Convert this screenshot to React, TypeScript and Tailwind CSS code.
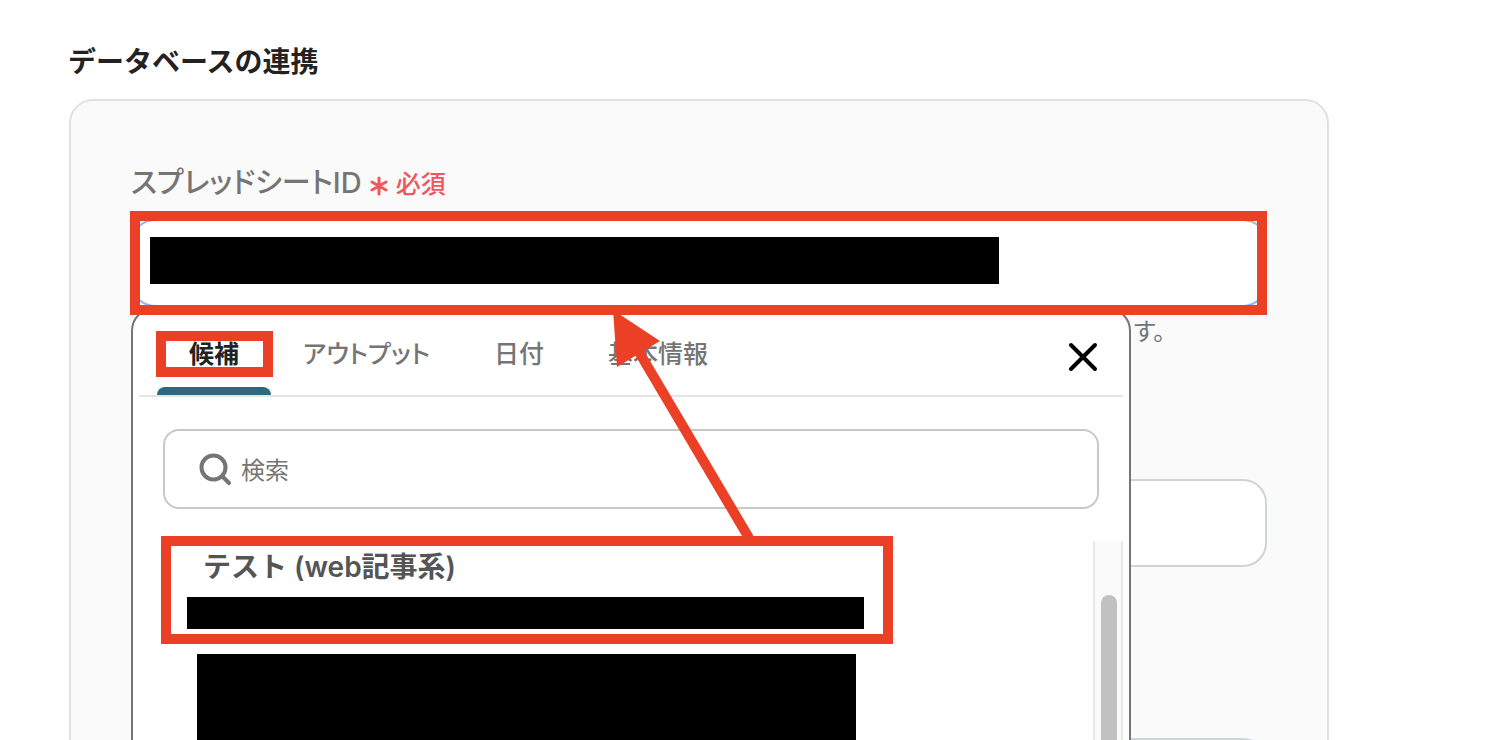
import { useState } from 'react'

const tabs = ['候補', 'アウトプット', '日付', '基本情報']

const SearchIcon = () => (
  <svg className="h-9 w-9 shrink-0" viewBox="0 0 36 36" fill="none" stroke="#757575" strokeWidth="4" strokeLinecap="round" aria-hidden="true">
    <circle cx="16.5" cy="16.5" r="12" />
    <path d="M25.5 25.5l6.5 6.5" />
  </svg>
)

const CloseIcon = () => (
  <svg className="h-8 w-8" viewBox="0 0 32 32" fill="none" stroke="#000000" strokeWidth="4" strokeLinecap="round" aria-hidden="true">
    <path d="M4 4l24 24M28 4L4 28" />
  </svg>
)

// 候補を選ぶポップオーバー
const SuggestPopover = () => {
  const [activeTab, setActiveTab] = useState(tabs[0])
  const [keyword, setKeyword] = useState('')

  return (
    <div className="absolute left-0 top-full z-10 min-h-[600px] w-[1000px] rounded-3xl border-2 border-[#757575] bg-white p-[6px]">
      <div className="flex h-[82px] items-stretch border-b-2 border-[#e5e5e5] pl-[18px] pr-4">
        <div role="tablist" className="flex flex-1">
          {tabs.map(tab => (
            <button
              key={tab}
              type="button"
              role="tab"
              aria-selected={activeTab === tab}
              onClick={() => setActiveTab(tab)}
              className={`relative px-8 text-[25px] [font-feature-settings:'palt'] ${
                activeTab === tab ? 'font-bold text-[#222222]' : 'font-medium text-[#757575]'
              }`}
            >
              {tab}
              {activeTab === tab && (
                <span className="absolute inset-x-0 bottom-0 h-2 rounded-t-lg bg-[#2f6780]" />
              )}
              {tab === '候補' && (
                <span className="absolute -left-px -right-[2px] top-4 h-[46px] border-10 border-[#eb4026]" />
              )}
            </button>
          ))}
        </div>
        <button type="button" aria-label="閉じる" className="mt-[18px] flex h-12 w-12 items-center justify-center">
          <CloseIcon />
        </button>
      </div>

      <label className="mx-6 mt-8 flex h-20 items-center gap-2 rounded-2xl border-2 border-[#c8c8c8] px-8">
        <SearchIcon />
        <input
          type="search"
          aria-label="検索"
          placeholder="検索"
          value={keyword}
          onChange={e => setKeyword(e.target.value)}
          className="w-full bg-transparent pt-[3px] text-2xl outline-none placeholder:text-[#757575]"
        />
      </label>

      <div className="mt-8 flex h-[420px]">
        <div className="relative flex-1 pl-12">
          <button type="button" className="block h-[88px] w-full pl-4 text-left">
            <span className="block h-14 text-[28px] font-semibold leading-[52px] text-[#555555]">
              テスト (web記事系)
            </span>
            <span className="-ml-4 block h-8 w-[677px] bg-black" />
          </button>
          <div className="ml-[10px] mt-[25px] h-[300px] w-[659px] bg-black" />
          <div className="pointer-events-none absolute -top-[5px] left-[22px] h-[108px] w-[732px] border-10 border-[#eb4026]" />
        </div>
        <div className="w-[30px] border-x-2 border-[#e8e8e8] bg-[#fafafa] pl-[6px] pr-1 pt-[54px]">
          <div className="h-80 w-4 rounded-full bg-[#c1c1c1]" />
        </div>
      </div>

      {/* 候補から入力欄への矢印 */}
      <svg className="pointer-events-none absolute -top-[2px] left-[466px] h-[236px] w-[160px]" viewBox="0 0 160 236" fill="#eb4026" aria-hidden="true">
        <path d="M40 45L150 231" stroke="#eb4026" strokeWidth="10" />
        <path d="M14 3L61 34L18 60Z" />
      </svg>
    </div>
  )
}

const App = () => {
  const [sheetId, setSheetId] = useState('')

  return (
    <main className="h-screen overflow-hidden bg-white pl-[68px] pr-[175px] pt-[42px] font-['Inter','Noto_Sans_CJK_JP',sans-serif]">
      <h2 className="text-[28px] font-bold leading-10 text-[#222222]">データベースの連携</h2>

      <section className="ml-px mt-[17px] rounded-3xl border-2 border-[#dee2e6] bg-[#fafafa] p-[60px]">
        <label htmlFor="sheet-id" className="flex h-10 items-center pt-1 text-[29px] font-medium leading-10 text-[#757575] [font-feature-settings:'palt']">
          スプレッドシートID
          <span className="ml-2 flex items-center gap-2 pt-[2px] text-[25px] text-[#f0565e]">
            <svg className="mt-1 h-5 w-[18px]" viewBox="0 0 18 20" fill="none" stroke="currentColor" strokeWidth="3" strokeLinecap="round" aria-hidden="true">
              <path d="M9 2v16M2 6l14 8M16 6L2 14" />
            </svg>
            必須
          </span>
        </label>

        <div className="relative mt-[18px]">
          <input
            id="sheet-id"
            type="text"
            value={sheetId}
            onChange={e => setSheetId(e.target.value)}
            className="block h-[88px] w-full rounded-3xl border-2 border-[#8bb9fb] bg-white px-6 text-2xl outline-none"
          />
          <span className="pointer-events-none absolute left-[19px] top-[18px] h-[47px] w-[849px] bg-black" />
          <SuggestPopover />
          <span className="pointer-events-none absolute -inset-y-2 -left-px right-0 z-20 border-10 border-[#eb4026]" />
        </div>
        <p className="mt-[7px] w-[1034px] text-right text-2xl leading-9 text-[#6c757d] [font-feature-settings:'palt']">す。</p>

        <input type="text" aria-label="シート名" className="mt-[129px] block h-[88px] w-full rounded-3xl border-2 border-[#ced4da] bg-white px-6 text-2xl" />
        <input type="text" aria-label="開始行" className="mt-[171px] block h-[88px] w-full rounded-3xl border-2 border-[#ced4da] bg-white px-6 text-2xl" />
      </section>
    </main>
  )
}

export default App
